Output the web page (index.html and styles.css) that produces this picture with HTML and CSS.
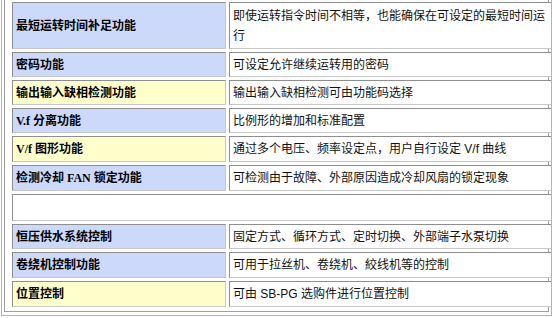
FILE: index.html
```html
<!DOCTYPE html>
<html lang="zh">
<head>
<meta charset="utf-8">
<link rel="stylesheet" href="styles.css">
</head>
<body>
<div class="frame">
  <div class="panel">
    <table class="spec">
      <tr class="r-tall">
        <td class="label blue">最短运转时间补足功能</td>
        <td class="value">即使运转指令时间不相等，也能确保在可设定的最短时间运行</td>
      </tr>
      <tr>
        <td class="label blue">密码功能</td>
        <td class="value">可设定允许继续运转用的密码</td>
      </tr>
      <tr>
        <td class="label yellow">输出输入缺相检测功能</td>
        <td class="value">输出输入缺相检测可由功能码选择</td>
      </tr>
      <tr>
        <td class="label blue">V.f 分离功能</td>
        <td class="value">比例形的增加和标准配置</td>
      </tr>
      <tr class="r-26">
        <td class="label yellow">V/f 图形功能</td>
        <td class="value">通过多个电压、频率设定点，用户自行设定 V/f 曲线</td>
      </tr>
      <tr class="r-26">
        <td class="label blue">检测冷却 FAN 锁定功能</td>
        <td class="value">可检测由于故障、外部原因造成冷却风扇的锁定现象</td>
      </tr>
      <tr class="r-empty">
        <td class="empty" colspan="2"></td>
      </tr>
      <tr>
        <td class="label blue">恒压供水系统控制</td>
        <td class="value">固定方式、循环方式、定时切换、外部端子水泵切换</td>
      </tr>
      <tr class="r-26">
        <td class="label blue">卷绕机控制功能</td>
        <td class="value">可用于拉丝机、卷绕机、絞线机等的控制</td>
      </tr>
      <tr class="r-26">
        <td class="label yellow">位置控制</td>
        <td class="value">可由 SB-PG 选购件进行位置控制</td>
      </tr>
    </table>
  </div>
</div>
</body>
</html>
```

FILE: styles.css
```css
html, body {
  margin: 0;
  padding: 0;
  background: #ffffff;
}

.frame {
  width: 551px;
  height: 316px;
  box-sizing: border-box;
  border-left: 1px solid #b4b4b4;
  border-right: 1px solid #b4b4b4;
  border-bottom: 1px solid #b4b4b4;
  padding: 0 2px 2px 2px;
  margin-left: 1px;
  overflow: hidden;
}

.panel {
  height: 100%;
  box-sizing: border-box;
  border-left: 1px solid #a0a0a0;
  border-right: 1px solid #a0a0a0;
  border-bottom: 1px solid #a0a0a0;
  padding: 0 0 0 5px;
}

.spec {
  border-collapse: separate;
  border-spacing: 3px;
  margin-top: -1px;
  margin-left: -1px;
  table-layout: fixed;
  width: 546px;
}

.spec td {
  border: 1px solid #8e8e8e;
  border-right-color: #c8c8c8;
  border-bottom-color: #c8c8c8;
  height: 23px;
  padding: 0 3px;
  font-size: 12px;
  line-height: 20px;
  vertical-align: middle;
}

.spec .r-tall td {
  height: 45px;
}

.spec .r-26 td {
  height: 24px;
}

.spec .r-empty td {
  height: 25px;
}

.label {
  width: 206px;
  font-family: "Liberation Serif", "Noto Sans CJK SC", serif;
  font-weight: bold;
  color: #000000;
  padding-left: 4px;
}

.blue {
  background: #ccd9fa;
}

.yellow {
  background: #ffffcc;
}

.value {
  font-family: "Liberation Sans", "Noto Sans CJK SC", sans-serif;
  color: #111111;
  background: #ffffff;
}

.empty {
  background: #ffffff;
}
```
